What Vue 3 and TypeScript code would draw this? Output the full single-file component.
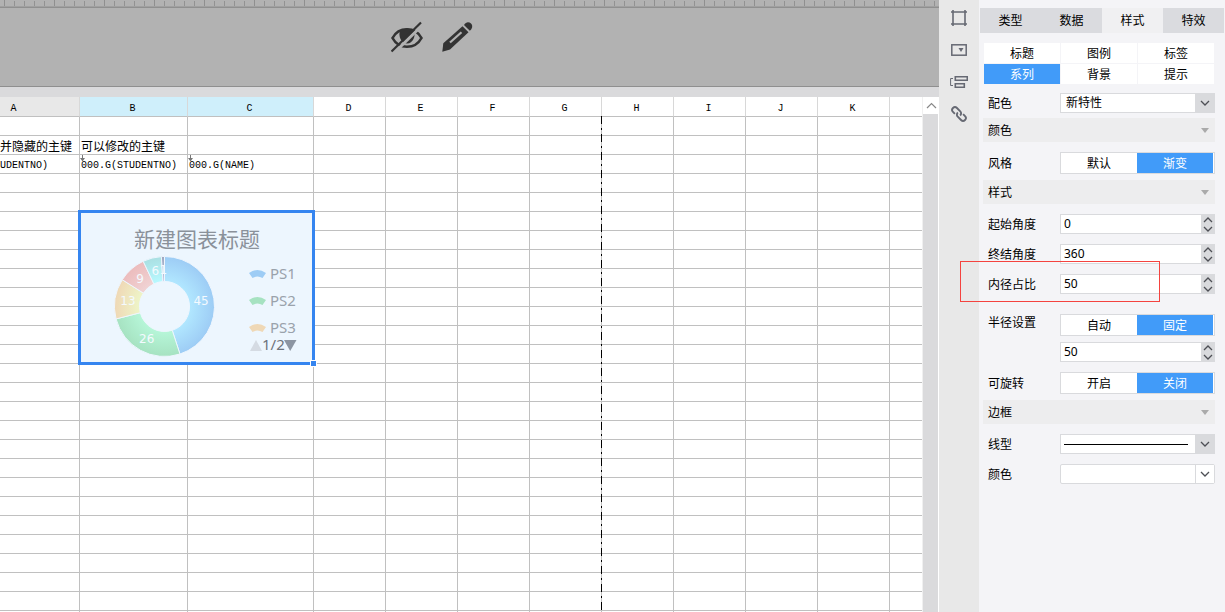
<script setup lang="ts">
import { ref } from 'vue'

interface Slice {
  value: number
  outer: string
  inner: string
}

const columns = ['A', 'B', 'C', 'D', 'E', 'F', 'G', 'H', 'I', 'J', 'K', '']
const rowCount = 40
const cells: Record<string, string> = {
  'A2': '并隐藏的主键',
  'B2': '可以修改的主键',
  'A3': 'UDENTNO)',
  'B3': '000.G(STUDENTNO)',
  'C3': '000.G(NAME)',
}
const expanding = ['B3', 'C3']

const tabs = ['类型', '数据', '样式', '特效']
const activeTab = ref('样式')
const subTabs = ['标题', '图例', '标签', '系列', '背景', '提示']
const activeSubTab = ref('系列')

const scheme = ref('新特性')
const fillStyle = ref('渐变')
const startAngle = ref(0)
const endAngle = ref(360)
const innerRatio = ref(50)
const radiusMode = ref('固定')
const radius = ref(50)
const rotatable = ref('关闭')

const slices: Slice[] = [
  { value: 45, outer: '#9dccf5', inner: '#b1e7ff' },
  { value: 26, outer: '#a6e2c1', inner: '#b6f6d8' },
  { value: 13, outer: '#efd8b6', inner: '#eef5c8' },
  { value: 9, outer: '#ecbcbd', inner: '#f0d3d4' },
  { value: 6, outer: '#aadfe2', inner: '#b8f9ff' },
  { value: 1, outer: '#9da7c0', inner: '#c0c6e0' },
]

const cx = 84.5
const cy = 93.5
const outerR = 50
const innerR = 25

function point(r: number, share: number): string {
  const a = share * Math.PI * 2
  return `${(cx + r * Math.sin(a)).toFixed(2)} ${(cy - r * Math.cos(a)).toFixed(2)}`
}

let running = 0
const arcs = slices.map((s) => {
  const from = running / 100
  running += s.value
  const to = running / 100
  const mid = ((from + to) / 2) * Math.PI * 2
  return {
    ...s,
    d: `M${point(outerR, from)}A${outerR} ${outerR} 0 0 1 ${point(outerR, to)}L${point(innerR, to)}A${innerR} ${innerR} 0 0 0 ${point(innerR, from)}Z`,
    x: cx + 37 * Math.sin(mid),
    y: cy - 37 * Math.cos(mid) + 4,
  }
})

const legend = [
  { name: 'PS1', color: '#9dccf5', y: 61 },
  { name: 'PS2', color: '#a6e2c1', y: 88 },
  { name: 'PS3', color: '#efd8b6', y: 115 },
]

function step(target: { value: number }, by: number) {
  target.value += by
}
const angleFields = [
  { id: 'start', label: '起始角度', model: startAngle },
  { id: 'end', label: '终结角度', model: endAngle },
  { id: 'inner', label: '内径占比', model: innerRatio },
]
</script>

<template>
  <div class="app">
    <main class="workspace">
      <div class="ruler"></div>
      <div class="actions">
        <button type="button" aria-label="隐藏">
          <svg width="32" height="32" viewBox="0 0 32 32">
            <path d="M1.500 17C5 10.500 10 8.300 16 8.300S27 10.500 30.500 17C27 23.500 22 25.800 16 25.800S5 23.500 1.500 17Z" fill="none" stroke="#333" stroke-width="2.600" />
            <path d="M9 9.500C13 7 19 7 23 9.500C25 15 22 22.500 16 22.500S7 15 9 9.500Z" fill="#333" />
            <path d="M3 32L32.500 3" stroke="#b2b2b2" stroke-width="3" />
            <path d="M.5 30.500L30 1.500" stroke="#333" stroke-width="2.200" />
          </svg>
        </button>
        <button type="button" aria-label="编辑">
          <svg width="32" height="32" viewBox="0 0 32 32">
            <path d="M.3 30.700L1.300 22.300L20.500 5.300L26.500 11.300L8 28.500Z" fill="#333" />
            <path d="M22 4C24 .5 27 .5 29 2.500S30.500 7.500 27.800 9.800Z" fill="#333" />
            <path d="M8 21.500L19.500 11.200" stroke="#b2b2b2" stroke-width="2.200" />
          </svg>
        </button>
      </div>
      <div class="band"></div>
      <div class="sheet-row">
        <div class="sheet">
          <table>
            <colgroup>
              <col class="c-a" /><col class="c-b" /><col class="c-c" />
              <col v-for="n in 8" :key="n" class="c-n" /><col />
            </colgroup>
            <thead>
              <tr>
                <th v-for="c in columns" :key="c" :class="{ first: c === 'A', picked: c === 'B' || c === 'C' }">{{ c }}</th>
              </tr>
            </thead>
            <tbody>
              <tr v-for="r in rowCount" :key="r">
                <td v-for="c in columns" :key="c" :class="{ first: c === 'A', title: r === 2 }">
                  <svg v-if="expanding.includes(c + r)" class="expand" width="5" height="7" viewBox="0 0 5 7">
                    <path d="M2 0H3V3H5L2.500 6.500L0 3H2Z" fill="#777" />
                  </svg>
                  {{ cells[c + r] }}
                </td>
              </tr>
            </tbody>
          </table>
          <div class="page-break"></div>
          <div class="chart">
            <svg width="231" height="149" viewBox="1 0 231 149">
              <defs>
                <radialGradient v-for="(a, i) in arcs" :id="'g' + i" :key="i" gradientUnits="userSpaceOnUse" :cx="cx" :cy="cy" :r="outerR">
                  <stop offset="0.5" :stop-color="a.inner" />
                  <stop offset="1" :stop-color="a.outer" />
                </radialGradient>
              </defs>
              <text x="117" y="34" class="chart-title">新建图表标题</text>
              <path v-for="(a, i) in arcs" :key="i" :d="a.d" :fill="`url(#g${i})`" stroke="#eef6fe" />
              <text v-for="(a, i) in arcs" :key="i" :x="a.x" :y="a.y" class="slice-label">{{ a.value }}</text>
              <g v-for="l in legend" :key="l.name">
                <path :d="`M169 ${l.y - 1}Q177.500 ${l.y - 7} 186 ${l.y - 1}L182.500 ${l.y + 4}Q177.500 ${l.y + 1} 172.500 ${l.y + 4}Z`" :fill="l.color" />
                <text x="190" :y="l.y + 5" class="legend-text">{{ l.name }}</text>
              </g>
              <path d="M170 138L176 127L182 138Z" fill="#d5dbe3" />
              <text x="182" y="137" class="pager">1/2</text>
              <path d="M204 127H216.500L210.200 138Z" fill="#8c95a2" />
            </svg>
            <span class="handle"></span>
          </div>
        </div>
        <div class="scroll">
          <button type="button" aria-label="向上滚动">
            <svg width="11" height="7" viewBox="0 0 11 7"><path d="M1 6L5.500 1.500L10 6" fill="none" stroke="#888" stroke-width="1.200" /></svg>
          </button>
          <div class="thumb"></div>
        </div>
      </div>
    </main>

    <nav class="rail">
      <button type="button" aria-label="单元格元素">
        <svg width="18" height="18" viewBox="0 0 18 18"><path d="M1 3H17M1 15H17M3 1V17M15 1V17" fill="none" stroke="#666973" stroke-width="1.600" /></svg>
      </button>
      <button type="button" aria-label="控件设置">
        <svg width="18" height="18" viewBox="0 0 18 18"><rect x="1.800" y="3.800" width="14.400" height="10.400" fill="none" stroke="#666973" stroke-width="1.500" /><path d="M8.500 7H13.500L11 11Z" fill="#666973" /></svg>
      </button>
      <button type="button" aria-label="条件属性">
        <svg width="18" height="18" viewBox="0 0 18 18"><path d="M3 5.500H.6V12.500H3" fill="none" stroke="#666973" /><path d="M5.300 3.800H17.300V7.200H5.300ZM5.300 10.800H14.300V14.200H5.300Z" fill="none" stroke="#666973" stroke-width="1.600" /></svg>
      </button>
      <button type="button" aria-label="超级链接">
        <svg width="18" height="18" viewBox="0 0 18 18">
          <g transform="rotate(45 9 9)" fill="none" stroke="#666973" stroke-width="1.900">
            <path d="M6 11.800H3.300A2.800 2.800 0 0 1 3.300 6.200H8A2.800 2.800 0 0 1 10.800 9.200" />
            <path d="M12 6.200H14.700A2.800 2.800 0 0 1 14.700 11.800H10A2.800 2.800 0 0 1 7.200 8.800" />
          </g>
        </svg>
      </button>
    </nav>

    <aside class="panel">
      <div class="tabs" role="tablist">
        <button v-for="t in tabs" :key="t" type="button" role="tab" :aria-selected="t === activeTab" :class="{ on: t === activeTab }" @click="activeTab = t">{{ t }}</button>
      </div>
      <div class="subtabs" role="tablist">
        <button v-for="t in subTabs" :key="t" type="button" role="tab" :aria-selected="t === activeSubTab" :class="{ on: t === activeSubTab }" @click="activeSubTab = t">{{ t }}</button>
      </div>

      <div class="field">
        <label for="scheme">配色</label>
        <div class="drop">
          <select id="scheme" v-model="scheme"><option>新特性</option></select>
          <span class="chev"><svg width="10" height="6" viewBox="0 0 10 6"><path d="M1 1L5 5L9 1" /></svg></span>
        </div>
      </div>
      <button type="button" class="section tight">颜色<i></i></button>

      <div class="field">
        <span class="label">风格</span>
        <div class="segment" role="radiogroup" aria-label="风格">
          <label v-for="o in ['默认', '渐变']" :key="o" :class="{ on: fillStyle === o }"><input v-model="fillStyle" type="radio" name="fill" :value="o" />{{ o }}</label>
        </div>
      </div>
      <button type="button" class="section">样式<i></i></button>

      <div v-for="f in angleFields" :key="f.id" class="field">
        <label :for="f.id">{{ f.label }}</label>
        <div class="spin">
          <input :id="f.id" v-model="f.model.value" type="text" />
          <span class="steps">
            <button type="button" aria-label="增加" @click="step(f.model, 1)"><svg width="10" height="6" viewBox="0 0 10 6"><path d="M1 5L5 1L9 5" /></svg></button>
            <button type="button" aria-label="减少" @click="step(f.model, -1)"><svg width="10" height="6" viewBox="0 0 10 6"><path d="M1 1L5 5L9 1" /></svg></button>
          </span>
        </div>
      </div>

      <div class="field radius">
        <label for="radius">半径设置</label>
        <div class="stack">
          <div class="segment" role="radiogroup" aria-label="半径设置">
            <label v-for="o in ['自动', '固定']" :key="o" :class="{ on: radiusMode === o }"><input v-model="radiusMode" type="radio" name="radius-mode" :value="o" />{{ o }}</label>
          </div>
          <div class="spin">
            <input id="radius" v-model="radius" type="text" />
            <span class="steps">
              <button type="button" aria-label="增加" @click="radius++"><svg width="10" height="6" viewBox="0 0 10 6"><path d="M1 5L5 1L9 5" /></svg></button>
              <button type="button" aria-label="减少" @click="radius--"><svg width="10" height="6" viewBox="0 0 10 6"><path d="M1 1L5 5L9 1" /></svg></button>
            </span>
          </div>
        </div>
      </div>

      <div class="field">
        <span class="label">可旋转</span>
        <div class="segment" role="radiogroup" aria-label="可旋转">
          <label v-for="o in ['开启', '关闭']" :key="o" :class="{ on: rotatable === o }"><input v-model="rotatable" type="radio" name="rotatable" :value="o" />{{ o }}</label>
        </div>
      </div>
      <button type="button" class="section">边框<i></i></button>

      <div class="field">
        <label for="line">线型</label>
        <div class="drop">
          <select id="line"><option></option></select>
          <span class="line-sample"></span>
          <span class="chev"><svg width="10" height="6" viewBox="0 0 10 6"><path d="M1 1L5 5L9 1" /></svg></span>
        </div>
      </div>
      <div class="field">
        <label for="color">颜色</label>
        <div class="drop plain">
          <select id="color"><option></option></select>
          <span class="chev"><svg width="10" height="6" viewBox="0 0 10 6"><path d="M1 1L5 5L9 1" /></svg></span>
        </div>
      </div>
    </aside>

    <div class="annotation"></div>
  </div>
</template>

<style>
body {
  margin: 0;
}
</style>

<style scoped>
.app {
  position: relative;
  display: flex;
  height: 100vh;
  overflow: hidden;
  font: 12px/18px "Noto Sans", "Noto Sans CJK SC", sans-serif;
  color: #000;
}
.app * {
  box-sizing: border-box;
}
button,
input,
select {
  margin: 0;
  padding: 0;
  border: 0;
  border-radius: 0;
  background: none;
  font: inherit;
  color: inherit;
  outline: none;
}
svg {
  display: block;
}

.workspace {
  flex: 1;
  min-width: 0;
  display: flex;
  flex-direction: column;
  background: #fff;
}
.ruler {
  flex: none;
  height: 8px;
  border-bottom: 1px solid #8f8f8f;
  background:
    linear-gradient(#a0a0a0, #a0a0a0) 0 6px / 100% 1px no-repeat,
    repeating-linear-gradient(90deg, transparent 0 4px, #8f8f8f 4px 5px, transparent 5px 50px) 0 0 / 100% 6px no-repeat,
    repeating-linear-gradient(90deg, transparent 0 4px, #929292 4px 5px, transparent 5px 10px) 0 1px / 100% 5px no-repeat,
    #b2b2b2;
}
.actions {
  flex: none;
  height: 79px;
  display: flex;
  justify-content: center;
  gap: 19px;
  padding: 13px 74px 0 0;
  background: #b2b2b2;
  border-bottom: 1px solid #8f8f8f;
}
.actions button {
  width: 32px;
  height: 32px;
}
.band {
  flex: none;
  height: 10px;
  background: #dadadc;
}
.sheet-row {
  flex: 1;
  min-height: 0;
  display: flex;
}
.sheet {
  position: relative;
  flex: 1;
  min-width: 0;
  overflow: hidden;
}
table {
  width: 100%;
  table-layout: fixed;
  border-collapse: separate;
  border-spacing: 0;
  font: 10px/14px "Liberation Mono", "Noto Sans CJK SC", monospace;
}
.c-a { width: 80px; }
.c-b { width: 108px; }
.c-c { width: 126px; }
.c-n { width: 72px; }
th {
  height: 20px;
  padding: 4px 2px 0 0;
  font-weight: 400;
  border-right: 1px solid #d8d8d8;
  border-bottom: 1px solid #c0c0c0;
}
th.first {
  padding-right: 52px;
  background: #e8e8e8;
}
th.picked {
  background: #cfeffb;
}
td {
  position: relative;
  height: 19px;
  padding: 4px 0 0 1px;
  white-space: nowrap;
  border-right: 1px solid #c0c0c0;
  border-bottom: 1px solid #c0c0c0;
}
td.first {
  padding-left: 0;
}
td.title {
  font-size: 12px;
  line-height: 12px;
  padding-top: 6px;
}
th:last-child,
td:last-child {
  border-right: 0;
}
.expand {
  position: absolute;
  left: 0;
  top: 0;
}
.page-break {
  position: absolute;
  left: 601px;
  top: 19px;
  bottom: 0;
  width: 1px;
  background: repeating-linear-gradient(#000 0 8px, #c0c0c0 8px 12px, #000 12px 14px, #c0c0c0 14px 18px);
}
.chart {
  position: absolute;
  left: 78px;
  top: 113px;
  border: 3px solid #3585f0;
  background: #edf6fe;
}
.handle {
  position: absolute;
  right: -5px;
  bottom: -5px;
  width: 7px;
  height: 7px;
  background: #3585f0;
  border: 1px solid #fff;
}
.chart text {
  font-family: "Noto Sans", "Noto Sans CJK SC", sans-serif;
}
.chart-title {
  font-size: 21px;
  text-anchor: middle;
  fill: #8a919a;
}
.slice-label {
  font-size: 12px;
  text-anchor: middle;
  fill: #f4faff;
}
.chart .slice-label {
  font-family: "DejaVu Sans", sans-serif;
}
.legend-text {
  font-size: 15px;
  fill: #9aa2ab;
}
.pager {
  font-size: 15px;
  fill: #6d737b;
}
.scroll {
  flex: none;
  width: 17px;
  display: flex;
  flex-direction: column;
  border-left: 1px solid #f0f0f0;
}
.scroll button {
  height: 17px;
  display: grid;
  place-items: center;
}
.thumb {
  flex: 1;
  background: #dadadc;
  border-right: 1px solid #fff;
}

.rail {
  flex: none;
  width: 40px;
  padding: 2px 0;
  background: #e8e8e8;
}
.rail button {
  width: 40px;
  height: 32px;
  display: grid;
  place-items: center;
}

.panel {
  flex: none;
  width: 246px;
  padding: 8px 10px 0 4px;
  background: #f4f4f7;
}
.tabs {
  display: grid;
  grid-template-columns: repeat(4, 1fr);
  height: 25px;
  margin: 0 -9px 10px -3px;
}
.tabs button {
  background: #dadbdf;
}
.tabs button.on {
  background: #f0f0f2;
}
.subtabs {
  display: grid;
  grid-template-columns: repeat(3, 1fr);
  grid-auto-rows: 20px;
  gap: 1px;
  margin: 0 1px 9px;
}
.subtabs button {
  padding-top: 2px;
  background: #fff;
}
.subtabs button.on,
.segment .on {
  background: #419bf9;
  color: #fff;
}
.field {
  display: grid;
  grid-template-columns: 72px minmax(0, 1fr);
  align-items: center;
  margin: 10px 0 0 5px;
}
.field > label,
.label {
  padding-top: 2px;
}
.subtabs + .field {
  margin-top: 9px;
}
.section {
  display: flex;
  align-items: center;
  justify-content: space-between;
  width: 100%;
  height: 24px;
  margin-top: 6px;
  padding: 2px 6px 0 5px;
  background: #ededee;
}
.section.tight {
  margin-top: 5px;
}
.section i {
  margin-bottom: 2px;
  border: 4px solid transparent;
  border-top: 5px solid #aaa;
  border-bottom: 0;
}
.drop,
.spin {
  position: relative;
  display: flex;
  height: 20px;
  border: 1px solid #d9dadd;
  background: #fff;
}
.drop select {
  appearance: none;
  width: 100%;
  padding: 0 24px 0 5px;
}
.chev {
  position: absolute;
  right: 0;
  top: 0;
  width: 19px;
  height: 18px;
  display: grid;
  place-items: center;
  background: #d9dadd;
  pointer-events: none;
}
.plain {
  border-radius: 2px;
}
.plain .chev {
  background: #fff;
  border-left: 1px solid #d9dadd;
}
.chev path,
.steps path {
  fill: none;
  stroke: #4d4f55;
  stroke-width: 1.3;
}
.line-sample {
  position: absolute;
  left: 3px;
  right: 26px;
  top: 9px;
  height: 1px;
  background: #000;
  pointer-events: none;
}
.spin input {
  flex: 1;
  min-width: 0;
  padding-left: 3px;
}
.steps {
  flex: none;
  width: 13px;
  display: grid;
  grid-template-rows: 1fr 1fr;
  background: #d9dadd;
}
.steps button {
  display: grid;
  place-items: center;
}
.segment {
  display: grid;
  grid-template-columns: 1fr 1fr;
  height: 22px;
  padding-right: 1px;
  border: 1px solid #d9dadd;
  background: #fff;
}
.segment label {
  display: grid;
  place-items: center;
  padding-top: 1px;
}
.segment input {
  position: absolute;
  opacity: 0;
  pointer-events: none;
}
.radius {
  align-items: start;
  margin-top: 20px;
}
.field.radius > label {
  padding-top: 0;
}
.stack {
  display: grid;
  grid-template-columns: minmax(0, 1fr);
  gap: 6px;
}
.annotation {
  position: absolute;
  right: 65px;
  top: 261px;
  width: 200px;
  height: 41px;
  border: 1px solid #f4433f;
  pointer-events: none;
}
</style>
